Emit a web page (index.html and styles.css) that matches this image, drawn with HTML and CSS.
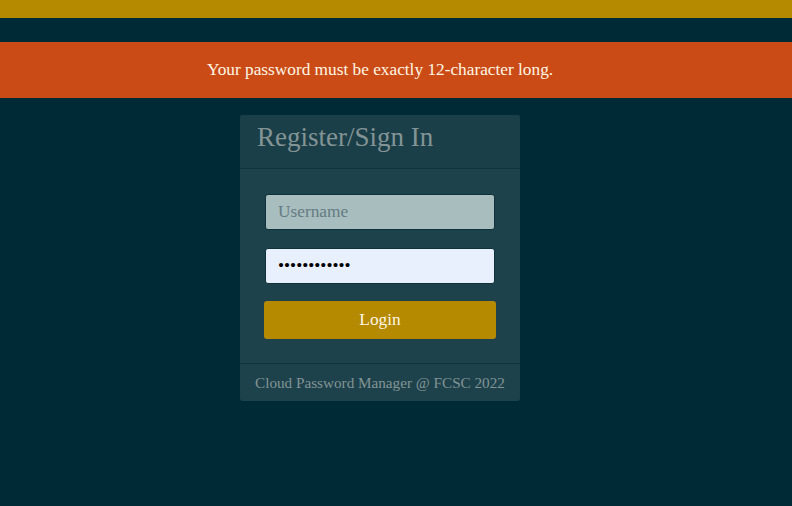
FILE: index.html
```html
<!DOCTYPE html>
<html>
<head>
<meta charset="utf-8">
<link rel="stylesheet" href="styles.css">
</head>
<body>
<div class="topbar"></div>
<div class="alert"><span class="alert-text">Your password must be exactly 12-character long.</span></div>
<div class="page">
  <div class="card">
    <div class="card-header">Register/Sign In</div>
    <div class="card-body">
      <input class="field field-user" type="text" placeholder="Username">
      <input class="field field-pass" type="password" value="............">
      <button class="btn">Login</button>
    </div>
    <div class="card-footer">Cloud Password Manager @ FCSC 2022</div>
  </div>
</div>
</body>
</html>
```
FILE: styles.css
```css
html, body {
  margin: 0;
  padding: 0;
  background: #002b36;
  font-family: "Liberation Serif", "DejaVu Serif", serif;
}
.topbar {
  height: 18px;
  background: #b58900;
}
.alert {
  margin-top: 24px;
  height: 56px;
  background: #cb4b16;
  color: #fdf6e3;
  display: flex;
  align-items: center;
  justify-content: center;
  padding-right: 32px;
  font-size: 17.3px;
}
.page {
  width: 760px;
  display: flex;
  justify-content: center;
  padding-top: 17px;
}
.card {
  width: 280px;
  background: #1d424b;
  border-radius: 3px;
  display: flex;
  flex-direction: column;
}
.card-header {
  height: 54px;
  box-sizing: border-box;
  padding: 6px 17px 0;
  font-size: 27px;
  color: #839496;
  border-bottom: 1px solid #0f313a;
  background: #1b3f48;
  border-radius: 3px 3px 0 0;
  line-height: 32px;
}
.card-body {
  padding: 25px 24px 24px;
  display: flex;
  flex-direction: column;
  border-bottom: 1px solid #0f313a;
}
.field {
  box-sizing: border-box;
  height: 36px;
  margin: 0 1px;
  border: 1px solid #0f313a;
  border-radius: 3px;
  padding: 0 12px;
  font-family: inherit;
  font-size: 17.3px;
  outline: none;
}
.field-user {
  background: #a8bdbd;
  color: #586e75;
}
.field-user::placeholder { color: #657b83; }
.field-pass {
  background: #e8f0fe;
  color: #000;
  margin-top: 18px;
}
.btn {
  margin-top: 17px;
  height: 38px;
  background: #b58900;
  border: none;
  border-radius: 3px;
  color: #fdf6e3;
  font-family: inherit;
  font-size: 17.3px;
}
.card-footer {
  height: 37px;
  display: flex;
  align-items: center;
  justify-content: center;
  font-size: 15.2px;
  color: #839496;
}
```
